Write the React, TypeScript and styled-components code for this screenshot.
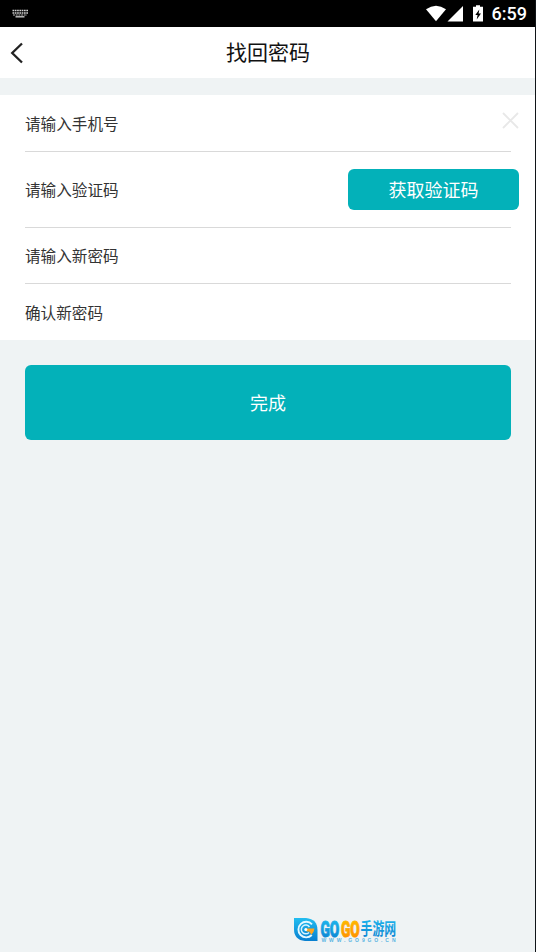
import React from "react";
import styled, { createGlobalStyle } from "styled-components";

const fields = [
  { label: "请输入手机号", height: 57, clearable: true },
  { label: "请输入验证码", height: 76, code: true },
  { label: "请输入新密码", height: 56 },
  { label: "确认新密码", height: 56 },
];

function StatusBar() {
  return (
    <StatusBarStyled>
      <svg width="16" height="9" viewBox="0 0 16 9">
        <path d="M0.5 1.5H16M0.5 4H16" stroke="#d0d0d0" strokeWidth="1.5" strokeDasharray="1.7 .6" />
        <path d="M1 6H15" stroke="#bbb" strokeWidth="1" strokeDasharray="2 .7" />
        <path d="M3.5 7.8H12.5" stroke="#c8c8c8" strokeWidth="1.4" />
      </svg>
      <div className="right">
        <svg width="60" height="20" viewBox="0 0 60 20">
          <path d="M0 5.2Q10 -1.8 20 5.2L10 17.2Z" fill="#fff" />
          <path d="M37 2V17.5H21.5Z" fill="#fff" />
          <path d="M47 2.7H50V1.2H54V2.7H57V17.5H47Z" fill="#fff" />
          <path d="M53.3 5.5L49.3 11H51.6L50.7 15.4L55 9.6H52.6Z" fill="#000" />
        </svg>
        <span>6:59</span>
      </div>
    </StatusBarStyled>
  );
}

function Watermark() {
  return (
    <WatermarkStyled width="112" height="32" viewBox="0 0 112 32">
      <defs>
        <linearGradient id="blue" x1="0" y1="0" x2="0" y2="1">
          <stop offset="0" stopColor="#22bdf0" />
          <stop offset="1" stopColor="#087fd0" />
        </linearGradient>
        <linearGradient id="orange" x1="0" y1="0" x2="0" y2="1">
          <stop offset="0" stopColor="#ffc000" />
          <stop offset="1" stopColor="#ff8a00" />
        </linearGradient>
      </defs>
      <path d="M2 2H14Q25.5 3 25.5 14V25H13Q2 24 2 13Z" fill="url(#blue)" />
      <path d="M20 8.3A7.8 7.8 0 1 0 19.8 19" fill="none" stroke="#e5f8ff" strokeWidth="1.9" />
      <path d="M17.4 11A4.4 4.4 0 1 0 17 16.4" fill="none" stroke="#d9f4ff" strokeWidth="1.5" />
      <path d="M13.5 12.6H22.5Q22 16.5 19.4 18.8L17.3 15.5H14.5Z" fill="#ffa51d" />
      <circle cx="13.8" cy="13.4" r="1.5" fill="#fff" />
      <g className="brand">
        <text x="28.5" y="20.5" textLength="18.8" lengthAdjust="spacingAndGlyphs" fill="url(#blue)" stroke="url(#blue)">GO</text>
        <text x="49" y="20.5" textLength="18.8" lengthAdjust="spacingAndGlyphs" fill="url(#orange)" stroke="url(#orange)">GO</text>
      </g>
      <text className="name" x="68.6" y="19" textLength="35.6" lengthAdjust="spacingAndGlyphs" fill="url(#blue)">手游网</text>
      <text className="site" x="29.5" y="26" textLength="74">WWW.GO9GO.CN</text>
    </WatermarkStyled>
  );
}

export default function App() {
  return (
    <>
      <GlobalStyle />
      <ScreenStyled>
        <StatusBar />
        <HeaderStyled>
          <svg width="14" height="22" viewBox="0 0 14 22">
            <path d="M12 1.5L2.2 11L12 20.5" fill="none" stroke="#222" strokeWidth="2.3" />
          </svg>
          <h1>找回密码</h1>
        </HeaderStyled>

        <FormStyled>
          {fields.map((field) => {
            return (
              <FieldStyled key={field.label} $height={field.height}>
                <label>{field.label}</label>
                {field.clearable && (
                  <ClearIcon width="17" height="17" viewBox="0 0 17 17">
                    <path d="M1 1L16 16M16 1L1 16" stroke="#e8e8e8" strokeWidth="1.9" />
                  </ClearIcon>
                )}
                {field.code && <CodeButton>获取验证码</CodeButton>}
              </FieldStyled>
            );
          })}
        </FormStyled>

        <SubmitButton>完成</SubmitButton>
        <Watermark />
      </ScreenStyled>
    </>
  );
}

const GlobalStyle = createGlobalStyle`
  * {
    box-sizing: border-box;
  }
  body {
    margin: 0;
    background: #eff3f4;
    font-family: Roboto, "Noto Sans CJK SC", sans-serif;
  }
`;

const ScreenStyled = styled.main`
  position: relative;
  display: flex;
  flex-direction: column;
  width: 100%;
  height: 100vh;
  border-right: 1px solid #101418;
  background: #eff3f4;
`;

const StatusBarStyled = styled.div`
  display: flex;
  align-items: center;
  justify-content: space-between;
  height: 27px;
  padding: 0 8px 0 12px;
  background: #000;

  .right {
    display: flex;
    align-items: center;
    gap: 6px;
    color: #fff;
    font-size: 18px;
    font-weight: 500;
    line-height: 27px;
  }
`;

const HeaderStyled = styled.header`
  display: grid;
  grid-template-columns: 40px 1fr 40px;
  align-items: center;
  height: 51px;
  background: #fff;

  svg {
    margin-left: 10px;
  }
  h1 {
    margin: 0;
    padding-left: 1px;
    color: #111;
    font-size: 21px;
    font-weight: 400;
    line-height: 30px;
    text-align: center;
  }
`;

const FormStyled = styled.section`
  margin-top: 17px;
  padding-left: 25px;
  background: #fff;
`;

const FieldStyled = styled.div<{ $height: number }>`
  display: flex;
  align-items: center;
  justify-content: space-between;
  height: ${(props) => props.$height}px;
  margin-right: 24px;
  border-bottom: 1px solid #d9d9d9;

  &:last-child {
    border-bottom: none;
  }
  label {
    padding-top: 3px;
    color: #333;
    font-size: 15.6px;
    line-height: 24px;
  }
`;

const ClearIcon = styled.svg`
  margin: 0 -8px 5px 0;
`;

const CodeButton = styled.button`
  flex: none;
  width: 171px;
  height: 41px;
  margin-right: -8px;
  padding: 0 0 2px;
  border: none;
  border-radius: 6px;
  background: #03b1b9;
  color: #fff;
  font-family: inherit;
  font-size: 18px;
`;

const SubmitButton = styled.button`
  height: 75px;
  margin: 25px 24px 0 25px;
  padding: 0 0 2px;
  border: none;
  border-radius: 6px;
  background: #03b1b9;
  color: #fff;
  font-family: inherit;
  font-size: 18px;
`;

const WatermarkStyled = styled.svg`
  position: absolute;
  left: 292px;
  bottom: 4px;
  overflow: visible;

  .brand {
    font: 900 22px Roboto, sans-serif;
    stroke-width: 0.9px;
  }
  .name {
    font: 700 16.5px "Noto Sans CJK SC", sans-serif;
  }
  .site {
    fill: #58b4e2;
    font: 700 5px "Liberation Sans", sans-serif;
  }
`;
